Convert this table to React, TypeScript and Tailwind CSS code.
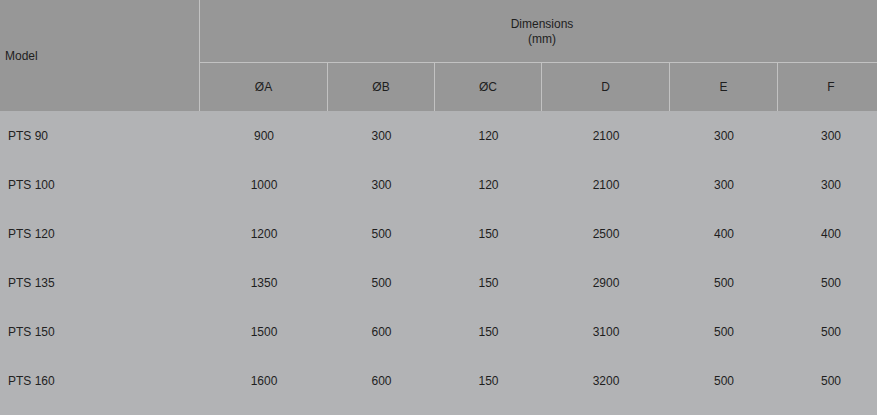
import React from 'react';

const rows = [
  { model: 'PTS 90', values: ['900', '300', '120', '2100', '300', '300'] },
  { model: 'PTS 100', values: ['1000', '300', '120', '2100', '300', '300'] },
  { model: 'PTS 120', values: ['1200', '500', '150', '2500', '400', '400'] },
  { model: 'PTS 135', values: ['1350', '500', '150', '2900', '500', '500'] },
  { model: 'PTS 150', values: ['1500', '600', '150', '3100', '500', '500'] },
  { model: 'PTS 160', values: ['1600', '600', '150', '3200', '500', '500'] },
];

const columns = [
  { label: 'ØA', width: 'w-[128px]' },
  { label: 'ØB', width: 'w-[107px]' },
  { label: 'ØC', width: 'w-[107px]' },
  { label: 'D', width: 'w-[128px]' },
  { label: 'E', width: 'w-[108px]' },
  { label: 'F', width: 'w-[106px]' },
];

export default function App() {
  return (
    <div className="w-[877px] min-h-[415px] overflow-hidden bg-[#b2b3b5]">
      <div className="w-[884px] text-[12px] text-[#1e1e1e] font-['Liberation_Sans',Arial,sans-serif]">
        <div className="flex bg-[#979797]">
          <div className="w-[200px] h-[111px] border-r border-[#c2c2c2] flex items-center pl-[5px]">
            Model
          </div>
          <div className="flex-1 flex flex-col">
            <div className="h-[63px] border-b border-[#c2c2c2] flex flex-col items-center justify-center leading-[15px] pt-[1px]">
              <span>Dimensions</span>
              <span>(mm)</span>
            </div>
            <div className="h-[48px] flex">
              {columns.map((col, i) => (
                <div
                  key={col.label}
                  className={`${col.width} flex items-center justify-center ${
                    i < columns.length - 1 ? 'border-r border-[#c2c2c2]' : ''
                  }`}
                >
                  {col.label}
                </div>
              ))}
            </div>
          </div>
        </div>

        <div>
          {rows.map((row) => (
            <div key={row.model} className="flex h-[49px] items-center">
              <div className="w-[200px] pl-[8px] text-[#222]">{row.model}</div>
              {row.values.map((v, i) => (
                <div key={i} className={`${columns[i].width} text-center`}>
                  {v}
                </div>
              ))}
            </div>
          ))}
        </div>
      </div>
    </div>
  );
}
